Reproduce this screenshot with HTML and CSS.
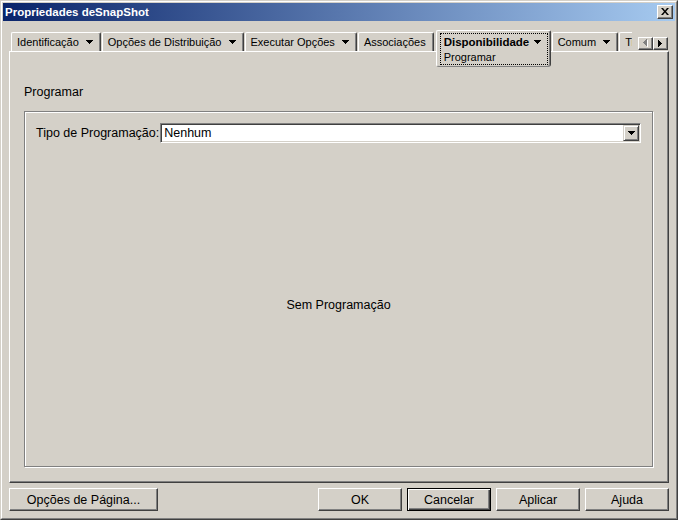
FILE: index.html
```html
<!DOCTYPE html>
<html lang="pt">
<head>
<meta charset="utf-8">
<title>Propriedades deSnapShot</title>
<link rel="stylesheet" href="styles.css">
</head>
<body>
<div class="window">
  <div class="frame">
    <div class="titlebar">
      <span class="title">Propriedades deSnapShot</span>
      <span class="close">
        <svg width="8" height="7" viewBox="0 0 8 7"><path d="M0 0H2L4 2.5L6 0H8L5 3.5L8 7H6L4 4.5L2 7H0L3 3.5Z" fill="#000"/></svg>
      </span>
    </div>
    <div class="body">
      <div class="tabrow">
        <div class="tabs">
          <div class="tab">Identificação<svg class="arrow" width="7" height="4" viewBox="0 0 7 4"><path d="M0 0H7V1H6V2H5V3H4V4H3V3H2V2H1V1H0Z"/></svg></div>
          <div class="tab">Opções de Distribuição<svg class="arrow" width="7" height="4" viewBox="0 0 7 4"><path d="M0 0H7V1H6V2H5V3H4V4H3V3H2V2H1V1H0Z"/></svg></div>
          <div class="tab">Executar Opções<svg class="arrow" width="7" height="4" viewBox="0 0 7 4"><path d="M0 0H7V1H6V2H5V3H4V4H3V3H2V2H1V1H0Z"/></svg></div>
          <div class="tab">Associações</div>
          <div class="tab tab-selected">
            <div class="focus">
              <div class="tab-main"><b>Disponibilidade</b><svg class="arrow" width="7" height="4" viewBox="0 0 7 4"><path d="M0 0H7V1H6V2H5V3H4V4H3V3H2V2H1V1H0Z"/></svg></div>
              <div class="tab-sub">Programar</div>
            </div>
          </div>
          <div class="tab">Comum<svg class="arrow" width="7" height="4" viewBox="0 0 7 4"><path d="M0 0H7V1H6V2H5V3H4V4H3V3H2V2H1V1H0Z"/></svg></div>
          <div class="tab">Tipo de Objeto</div>
        </div>
        <div class="scroller">
          <span class="sbtn"><svg width="5" height="8" viewBox="0 0 5 8"><path d="M5 1V8H4V7H3V6H2V5H1V4H2V3H3V2H4V1Z" fill="#fff"/><path d="M4 0V7H3V6H2V5H1V4H0V3H1V2H2V1H3V0Z" fill="#808080"/></svg></span>
          <span class="sbtn"><svg width="4" height="7" viewBox="0 0 4 7"><path d="M0 0V7H1V6H2V5H3V4H4V3H3V2H2V1H1V0Z" fill="#000"/></svg></span>
        </div>
      </div>
      <div class="panel">
        <div class="section-label">Programar</div>
        <div class="group">
          <div class="field-row">
            <span class="field-label">Tipo de Programação:</span>
            <div class="combo">
              <span class="combo-value">Nenhum</span>
              <span class="combo-btn"><svg width="7" height="4" viewBox="0 0 7 4"><path d="M0 0H7V1H6V2H5V3H4V4H3V3H2V2H1V1H0Z"/></svg></span>
            </div>
          </div>
          <div class="empty">Sem Programação</div>
        </div>
      </div>
      <div class="buttons">
        <button class="btn btn-wide">Opções de Pá<u>g</u>ina...</button>
        <div class="spacer"></div>
        <div class="btn-group">
          <button class="btn">OK</button>
          <button class="btn btn-default">Cancelar</button>
          <button class="btn">Aplicar</button>
          <button class="btn">A<u>j</u>uda</button>
        </div>
      </div>
    </div>
  </div>
</div>
</body>
</html>
```
FILE: styles.css
```css
* { box-sizing: border-box; }
html, body { margin: 0; padding: 0; }
body {
  width: 678px;
  height: 520px;
  overflow: hidden;
  background: #d4d0c8;
  font-family: "Liberation Sans", Arial, sans-serif;
  font-size: 12.5px;
  color: #000;
}
.window {
  width: 678px;
  height: 520px;
  border: 1px solid;
  border-color: #d4d0c8 #404040 #404040 #d4d0c8;
}
.frame {
  height: 100%;
  border: 1px solid;
  border-color: #fff #808080 #808080 #fff;
  padding: 1px;
  display: flex;
  flex-direction: column;
}
.titlebar {
  flex: none;
  height: 18px;
  background: linear-gradient(to right, #0a246a, #a6caf0);
  display: flex;
  align-items: center;
  justify-content: space-between;
  padding: 0 2px;
}
.title {
  color: #fff;
  font-weight: bold;
  font-size: 11.5px;
  line-height: 18px;
}
.close {
  width: 16px;
  height: 14px;
  background: #d4d0c8;
  border: 1px solid;
  border-color: #fff #404040 #404040 #fff;
  box-shadow: inset -1px -1px 0 #808080;
  display: flex;
  align-items: center;
  justify-content: center;
  padding: 0 1px 1px 0;
}
.close svg { display: block; }

.body {
  flex: 1;
  display: flex;
  flex-direction: column;
  padding: 9px 6px 6px 6px;
  min-height: 0;
}

/* tabs */
.tabrow {
  flex: none;
  height: 21px;
  display: flex;
  align-items: flex-start;
  position: relative;
  z-index: 1;
  font-size: 11px;
}
.tabs {
  flex: none;
  width: 621px;
  height: 37px;
  margin-left: 2px;
  display: flex;
  align-items: flex-start;
  overflow: hidden;
}
.tab {
  flex: none;
  margin-top: 2px;
  margin-right: 1px;
  height: 19px;
  padding: 0 7px 0 5px;
  border-top: 1px solid #fff;
  border-left: 1px solid #fff;
  border-right: 1px solid #404040;
  border-top-left-radius: 2px;
  border-top-right-radius: 2px;
  box-shadow: inset -1px 0 0 #808080;
  display: flex;
  align-items: center;
  gap: 7px;
  line-height: 16px;
  white-space: nowrap;
  background: #d4d0c8;
}
.arrow { display: block; flex: none; }
.tab-selected {
  margin-top: 0;
  margin-left: 1px;
  height: 37px;
  display: block;
  padding: 2px 2px 1px 3px;
  border-bottom: 1px solid #808080;
  border-radius: 2px 2px 3px 3px;
}
.focus {
  height: 32px;
  width: 108px;
  border: 1px dotted #000;
  padding: 0 6px 0 3px;
}
.tab-main {
  display: flex;
  align-items: center;
  justify-content: space-between;
  line-height: 16px;
  height: 16px;
}
.tab-main b { font-size: 11.5px; }
.tab-sub {
  line-height: 14px;
}
.scroller {
  flex: none;
  display: flex;
  margin-left: 6px;
  margin-top: 7px;
  height: 13px;
}
.sbtn {
  width: 15px;
  height: 13px;
  background: #d4d0c8;
  border: 1px solid;
  border-color: #fff #404040 #404040 #fff;
  box-shadow: inset -1px -1px 0 #808080;
  display: flex;
  align-items: center;
  justify-content: center;
  padding: 0 1px 1px 0;
}
.sbtn svg { display: block; }

/* panel */
.panel {
  flex: 1;
  min-height: 0;
  display: flex;
  flex-direction: column;
  border: 1px solid;
  border-color: #fff #404040 #404040 #fff;
  box-shadow: inset -1px -1px 0 #808080;
  padding: 34px 15px 15px 14px;
}
.section-label {
  line-height: 13px;
  margin-bottom: 12px;
}
.group {
  flex: 1;
  display: flex;
  flex-direction: column;
  border: 1px solid #808080;
  box-shadow: 1px 1px 0 #fff, inset 1px 1px 0 #fff;
  padding: 11px 11px 0 11px;
}
.field-row {
  display: flex;
  align-items: center;
  height: 20px;
}
.field-label {
  flex: none;
  white-space: nowrap;
  padding-right: 1px;
}
.combo {
  flex: 1;
  height: 20px;
  display: flex;
  align-items: center;
  background: #fff;
  border: 1px solid;
  border-color: #808080 #fff #fff #808080;
  box-shadow: inset 1px 1px 0 #404040, inset -1px -1px 0 #d4d0c8;
  padding: 1px;
}
.combo-value {
  flex: 1;
  padding-left: 2px;
}
.combo-btn {
  width: 16px;
  height: 16px;
  background: #d4d0c8;
  border: 1px solid;
  border-color: #d4d0c8 #404040 #404040 #d4d0c8;
  box-shadow: inset 1px 1px 0 #fff, inset -1px -1px 0 #808080;
  display: flex;
  align-items: center;
  justify-content: center;
}
.combo-btn svg { display: block; }
.empty {
  flex: 1;
  display: flex;
  align-items: center;
  justify-content: center;
}

/* buttons */
.buttons {
  flex: none;
  height: 23px;
  margin-top: 5px;
  display: flex;
}
.spacer { flex: 1; }
.btn-group {
  display: flex;
  gap: 5px;
}
.btn {
  width: 84px;
  height: 23px;
  padding: 0;
  margin: 0;
  font: inherit;
  color: #000;
  background: #d4d0c8;
  border: 1px solid;
  border-color: #fff #404040 #404040 #fff;
  box-shadow: inset -1px -1px 0 #808080;
  text-align: center;
  border-radius: 0;
}
.btn-wide { width: 149px; }
.btn-default {
  border: 1px solid #000;
  box-shadow: inset 1px 1px 0 #fff, inset -1px -1px 0 #404040, inset -2px -2px 0 #808080;
}
```
